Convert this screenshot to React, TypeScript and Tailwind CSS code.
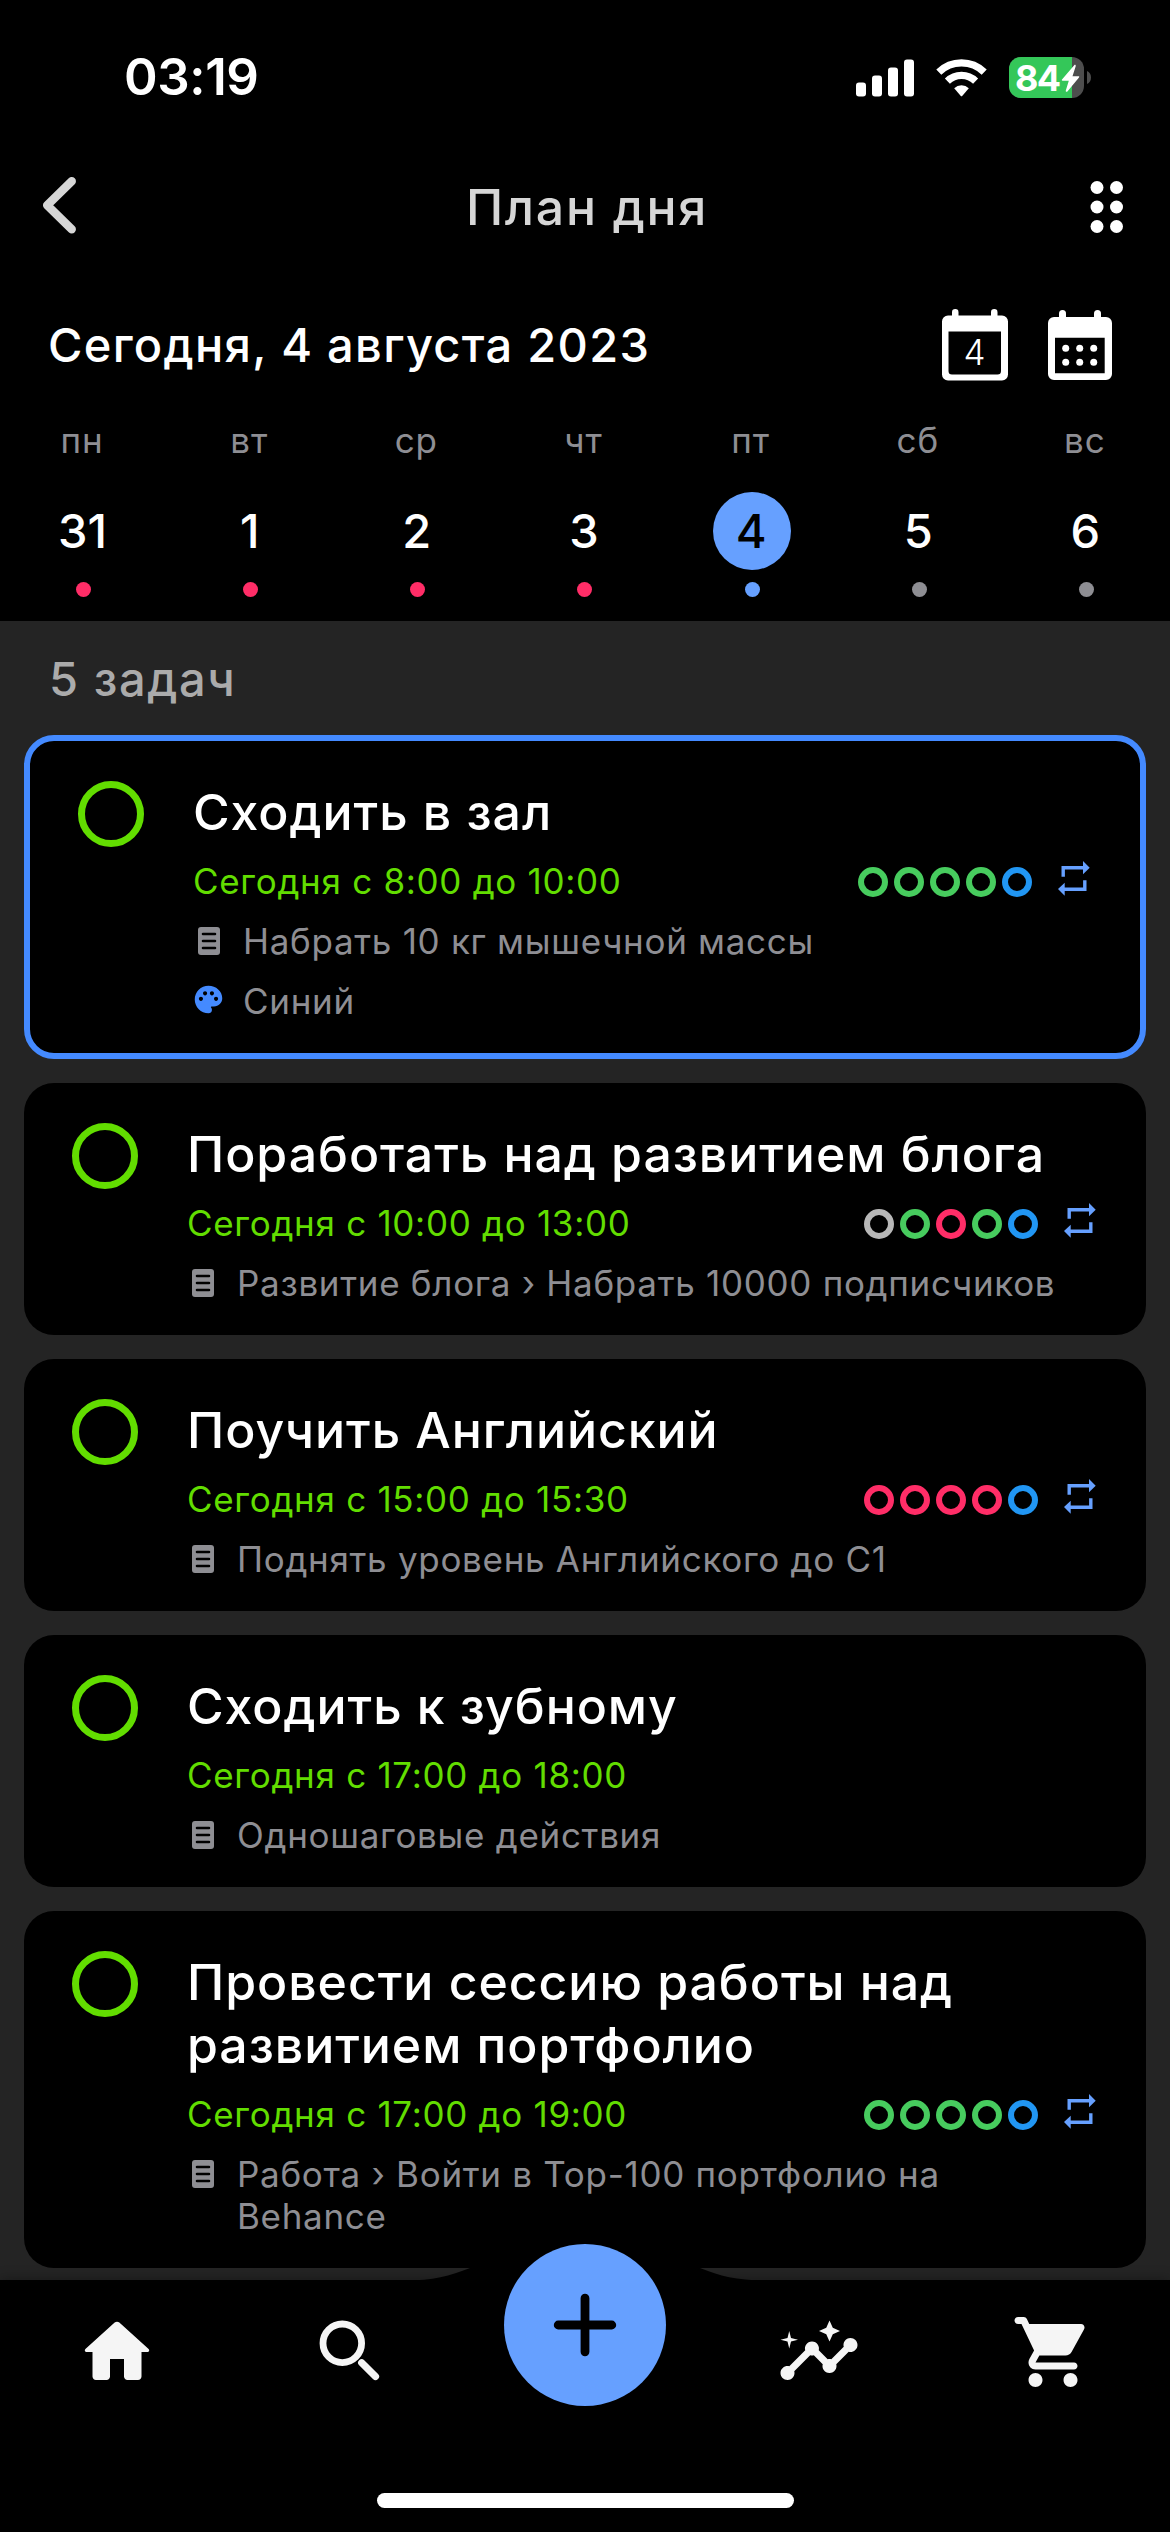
import { MdInsights, MdPalette } from 'react-icons/md'
import clsx from 'clsx'

type Mark = 'done' | 'missed' | 'skipped' | 'next'

type Task = {
  title: string
  time: string
  goal: string
  color?: string
  marks?: Mark[]
  selected?: boolean
}

const weekDays = [
  { label: 'пн', day: 31, dot: 'bg-[#ff2d67]' },
  { label: 'вт', day: 1, dot: 'bg-[#ff2d67]' },
  { label: 'ср', day: 2, dot: 'bg-[#ff2d67]' },
  { label: 'чт', day: 3, dot: 'bg-[#ff2d67]' },
  { label: 'пт', day: 4, dot: 'bg-[#66a0ff]', today: true },
  { label: 'сб', day: 5, dot: 'bg-[#8e8e93]' },
  { label: 'вс', day: 6, dot: 'bg-[#8e8e93]' },
]

const tasks: Task[] = [
  {
    title: 'Сходить в зал',
    time: 'Сегодня с 8:00 до 10:00',
    goal: 'Набрать 10 кг мышечной массы',
    color: 'Синий',
    marks: ['done', 'done', 'done', 'done', 'next'],
    selected: true,
  },
  {
    title: 'Поработать над развитием блога',
    time: 'Сегодня с 10:00 до 13:00',
    goal: 'Развитие блога › Набрать 10000 подписчиков',
    marks: ['skipped', 'done', 'missed', 'done', 'next'],
  },
  {
    title: 'Поучить Английский',
    time: 'Сегодня с 15:00 до 15:30',
    goal: 'Поднять уровень Английского до C1',
    marks: ['missed', 'missed', 'missed', 'missed', 'next'],
  },
  {
    title: 'Сходить к зубному',
    time: 'Сегодня с 17:00 до 18:00',
    goal: 'Одношаговые действия',
  },
  {
    title: 'Провести сессию работы над развитием портфолио',
    time: 'Сегодня с 17:00 до 19:00',
    goal: 'Работа › Войти в Top-100 портфолио на Behance',
    marks: ['done', 'done', 'done', 'done', 'next'],
  },
]

const markColors: Record<Mark, string> = {
  done: 'border-[#47cc5e]',
  missed: 'border-[#ff2d67]',
  skipped: 'border-[#b8b8b8]',
  next: 'border-[#2196f3]',
}

function StatusBar() {
  return (
    <div className="flex h-[155px] items-center justify-between pl-[124px] pr-[79px]">
      <span className="text-[51px] font-semibold tracking-[-0.4px]">03:19</span>
      <div className="flex items-center">
        <svg width="58" height="38" viewBox="0 0 58 38" fill="currentColor">
          <rect x="0" y="23.5" width="10" height="14" rx="3" />
          <rect x="16" y="16.5" width="10" height="21" rx="3" />
          <rect x="32" y="8.5" width="10" height="29" rx="3" />
          <rect x="48" y="0.5" width="10" height="37" rx="3" />
        </svg>
        <svg className="ml-[22px]" width="51" height="38" viewBox="0 0 51 38">
          <g fill="none" stroke="currentColor" strokeWidth="7.2">
            <path d="M2.8 13.2a32.5 32.5 0 0 1 45.4 0" />
            <path d="M11.4 22.2a20.2 20.2 0 0 1 28.2 0" />
          </g>
          <path d="M18.2 29.2a10.6 10.6 0 0 1 14.6 0l-6.4 7.6a1.2 1.2 0 0 1-1.8 0z" fill="currentColor" />
        </svg>
        <div className="relative ml-[22px] flex h-[41px] w-[75px] items-center overflow-hidden rounded-[12px] bg-[#4d4d4d]">
          <div className="absolute inset-y-0 left-0 w-[63px] bg-[#34c759]"></div>
          <span className="relative pl-[6px] text-[36px] font-bold tracking-[-1.6px]">84</span>
          <svg className="absolute left-[52px] top-[7px]" width="19" height="29" viewBox="0 0 19 29" fill="currentColor">
            <path d="M13.2 1.2 1 15.6c-.5.6-.3 1.2.6 1.2h6.2L4.8 26.6c-.3 1.2.9 1.6 1.6.8L18 13.4c.5-.7.3-1.2-.6-1.2h-5.9l3.2-10c.3-1.3-.8-1.8-1.5-1z" />
          </svg>
        </div>
        <svg className="ml-[3px]" width="4" height="13" viewBox="0 0 4 13" fill="#4d4d4d">
          <path d="M0 0c2.5 1 4 3.5 4 6.5S2.5 12 0 13z" />
        </svg>
      </div>
    </div>
  )
}

function TitleBar() {
  return (
    <div className="flex h-[104px] items-center justify-between pl-[42px] pr-[46px]">
      <svg className="mb-1" width="36" height="58" viewBox="0 0 36 58" fill="none" stroke="#d6d6d6" strokeWidth="8.5" strokeLinecap="round" strokeLinejoin="round">
        <path d="M29.7 5.2 5.2 29.2 29.7 53.2" />
      </svg>
      <h1 className="ml-[6px] text-[50px] font-medium tracking-[1.7px] text-[#d6d6d6]">План дня</h1>
      <svg width="34" height="54" viewBox="0 0 34 54" fill="currentColor">
        {[7, 26.5].map((x) =>
          [7.5, 27, 46.5].map((y) => <circle key={`${x}-${y}`} cx={x} cy={y} r="6.5" />)
        )}
      </svg>
    </div>
  )
}

function DateRow() {
  return (
    <div className="mt-[41px] flex h-[90px] items-center pl-[48px] pr-[58px]">
      <h2 className="flex-1 text-[47px] font-medium tracking-[1.3px]">Сегодня, 4 августа 2023</h2>
      <svg className="mr-[40px]" width="66" height="72" viewBox="0 0 66 72" fill="currentColor">
        <rect x="10" y="0" width="6.5" height="14" rx="3.2" />
        <rect x="49" y="0" width="6.5" height="14" rx="3.2" />
        <path
          fillRule="evenodd"
          d="M6 6.5h54a6 6 0 0 1 6 6V65.5a6 6 0 0 1-6 6H6a6 6 0 0 1-6-6V12.5a6 6 0 0 1 6-6zM6.5 22.5V62a3.5 3.5 0 0 0 3.5 3.5h45.5a3.5 3.5 0 0 0 3.5-3.5V22.5z"
        />
        <text x="32.5" y="56" textAnchor="middle" className="font-[Inter] text-[35px] font-light">4</text>
      </svg>
      <svg width="64" height="70" viewBox="0 0 64 70" fill="currentColor">
        <rect x="11" y="0" width="7" height="14" rx="3.5" />
        <rect x="46" y="0" width="7" height="14" rx="3.5" />
        <path
          fillRule="evenodd"
          d="M6 7h52a6 6 0 0 1 6 6v51a6 6 0 0 1-6 6H6a6 6 0 0 1-6-6V13a6 6 0 0 1 6-6zM7 27.8V63.2h49.7V27.8z"
        />
        {[17.7, 31.7, 45.7].map((x) =>
          [38.3, 52.3].map((y) => <circle key={`${x}-${y}`} cx={x} cy={y} r="3.5" />)
        )}
      </svg>
    </div>
  )
}

function WeekStrip() {
  return (
    <div className="mt-[29px] grid grid-cols-7 pb-6">
      {weekDays.map((d) => (
        <div key={d.label} className="flex flex-col items-center">
          <span className="pr-[3px] text-[35px] leading-[42px] tracking-[1px] text-[#8e8e93]">{d.label}</span>
          <span
            className={clsx(
              'mt-[31px] flex size-[78px] items-center justify-center rounded-full pr-[2px] text-[47px] font-medium',
              d.today && 'bg-[#66a0ff] text-black'
            )}
          >
            {d.day}
          </span>
          <span className={clsx('mt-3 size-[15px] rounded-full', d.dot)}></span>
        </div>
      ))}
    </div>
  )
}

function ListIcon() {
  return (
    <svg className="ml-[5px] mt-[7px] shrink-0" width="22" height="28" viewBox="0 0 22 28">
      <rect width="22" height="28" rx="3" fill="#8e8e93" />
      <path d="M5 7h12M5 14h12M5 21h12" stroke="#000" strokeWidth="2.6" strokeLinecap="round" />
    </svg>
  )
}

function RepeatIcon() {
  return (
    <svg className="mt-px" width="32" height="35" viewBox="0 0 32 35" fill="#66a0ff">
      <path d="M3.5 5H25V0l6.7 6.7L25 13.3V8.4H6.9v7.3H3.5z" />
      <path d="M28.5 19.3V30H6.7v4.7L0 28l6.7-6.3v4.9h18.4v-7.3z" />
    </svg>
  )
}

function TaskCard({ task }: { task: Task }) {
  return (
    <article
      className={clsx(
        'flex rounded-[30px] bg-black',
        task.selected && 'border-[6px] border-[#448aff]'
      )}
    >
      <div className="ml-12 mt-10 size-[66px] shrink-0 rounded-full border-[7px] border-[#62dd00]"></div>
      <div className="ml-[49px] flex-1 pb-[31px] pr-[50px] pt-10">
        <h3 className="text-[50px] font-medium leading-[63px] tracking-[0.95px]">{task.title}</h3>
        <div className="mt-4 flex h-[42px] items-start">
          <p className="flex-1 text-[35px] leading-[42px] tracking-[0.7px] text-[#62dd00]">{task.time}</p>
          {task.marks && (
            <>
              <div className="mr-[26px] mt-[7px] flex gap-1.5">
                {task.marks.map((m, i) => (
                  <span key={i} className={clsx('size-[30px] rounded-full border-[6px]', markColors[m])}></span>
                ))}
              </div>
              <RepeatIcon />
            </>
          )}
        </div>
        <div className="mt-[18px] flex pr-4">
          <ListIcon />
          <p className="ml-[23px] text-[35px] leading-[42px] tracking-[0.7px] text-[#8e8e93]">{task.goal}</p>
        </div>
        {task.color && (
          <div className="mt-[18px] flex">
            <MdPalette className="-ml-px mt-[3px] size-[33px] text-[#448aff]" />
            <p className="ml-[18px] text-[35px] leading-[42px] tracking-[0.7px] text-[#8e8e93]">{task.color}</p>
          </div>
        )}
      </div>
    </article>
  )
}

function TabBar() {
  return (
    <nav className="relative h-[252px] bg-black shadow-[0_0_12px_rgba(0,0,0,0.35)]">
      {/* Flared hump that lifts the bar around the add button */}
      <svg className="absolute left-[405px] top-[-55px]" width="360" height="56" viewBox="0 0 360 56">
        <path d="M0 55.5C28 55.5 45 51 65 43C100 28 115 0 180 0S260 28 295 43C315 51 332 55.5 360 55.5z" />
      </svg>
      <button className="absolute left-[504px] top-[-36px] flex size-[162px] items-center justify-center rounded-full bg-[#66a0ff]">
        <svg width="64" height="64" viewBox="0 0 64 64" stroke="#000" strokeWidth="8.8" strokeLinecap="round">
          <path d="M32 5.2v53.6M5.2 32h53.6" />
        </svg>
      </button>
      <div className="grid grid-cols-5 justify-items-center pt-[30px] text-[#f5f5f5]">
        <svg className="size-[84px]" viewBox="0 0 24 24" fill="currentColor">
          <path d="M10 19v-5h4v5c0 .55.45 1 1 1h3c.55 0 1-.45 1-1v-7h1.7c.46 0 .68-.57.33-.87L12.67 3.6c-.38-.34-.96-.34-1.34 0l-8.36 7.53c-.34.3-.13.87.33.87H5v7c0 .55.45 1 1 1h3c.55 0 1-.45 1-1z" />
        </svg>
        <svg className="size-[84px]" viewBox="0 0 84 84" fill="none" stroke="currentColor">
          <circle cx="33.3" cy="33.3" r="19.3" strokeWidth="6.8" />
          <path d="M52.7 52.7 66.5 66.5" strokeWidth="7.2" strokeLinecap="round" />
        </svg>
        <span className="size-[84px]"></span>
        <MdInsights className="size-[84px]" />
        <svg className="size-[84px]" viewBox="0 0 24 24" fill="currentColor">
          <path d="M7 18c-1.1 0-1.99.9-1.99 2S5.9 22 7 22s2-.9 2-2-.9-2-2-2zM1 3c0 .55.45 1 1 1h1l3.6 7.59-1.35 2.44C4.52 15.37 5.48 17 7 17h11c.55 0 1-.45 1-1s-.45-1-1-1H7l1.1-2h7.45c.75 0 1.41-.41 1.75-1.03l3.58-6.49c.37-.66-.11-1.48-.87-1.48H5.21l-.67-1.43c-.16-.35-.52-.57-.9-.57H2c-.55 0-1 .45-1 1zm16 15c-1.1 0-1.99.9-1.99 2s.89 2 1.99 2 2-.9 2-2-.9-2-2-2z" />
        </svg>
      </div>
      <div className="mx-auto mt-[99px] h-[15px] w-[417px] rounded-full bg-white"></div>
    </nav>
  )
}

export default function App() {
  return (
    <div className="flex h-[2532px] w-[1170px] flex-col overflow-hidden bg-black font-[Inter,'Noto_Sans',sans-serif] text-white">
      <header className="shrink-0">
        <StatusBar />
        <TitleBar />
        <DateRow />
        <WeekStrip />
      </header>

      <main className="h-[1659px] shrink-0 bg-[#242424] px-6">
        <p className="flex h-[114px] items-center pl-[25px] pt-[3px] text-[47px] font-medium tracking-[1.6px] text-[#ababab]">5 задач</p>
        <div className="flex flex-col gap-6">
          {tasks.map((task) => (
            <TaskCard key={task.title} task={task} />
          ))}
        </div>
      </main>

      <TabBar />
    </div>
  )
}
